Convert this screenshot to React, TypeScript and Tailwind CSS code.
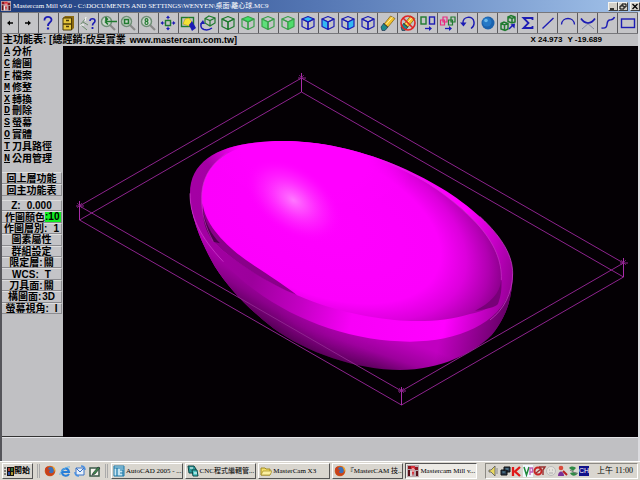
import { type ReactNode } from "react"

const GREEN = "#1f7a2e"
const BLUE = "#1c1cb4"

function Glyph({ children }: { children: ReactNode }) {
  return (
    <svg viewBox="0 0 18 18" className="size-[18px] shrink-0" fill="none" aria-hidden="true">
      {children}
    </svg>
  )
}

// Isometric wireframe cube, each visible face can be filled on its own
function Cube({
  color,
  top = "none",
  left = "none",
  right = "none",
}: {
  color: string
  top?: string
  left?: string
  right?: string
}) {
  return (
    <Glyph>
      <g stroke={color} strokeWidth="1.2" strokeLinejoin="round">
        <path d="M9 2.500 15 5 9 8 3 5Z" fill={top} />
        <path d="M3 5 9 8V15.500L3 12.500Z" fill={left} />
        <path d="M15 5 9 8V15.500L15 12.500Z" fill={right} />
      </g>
    </Glyph>
  )
}

function Magnifier({ children }: { children?: ReactNode }) {
  return (
    <Glyph>
      <path d="m11 11 5 5" stroke="#8a8a8a" strokeWidth="2.200" />
      <circle cx="7.500" cy="7.500" r="5" stroke="#6f8f77" strokeWidth="1.500" fill="#cfd8d0" />
      {children}
    </Glyph>
  )
}

function Pencil() {
  return (
    <>
      <path d="m2 13 3-4 4 4-3 3.500H3Z" fill="#1d8a8a" stroke="#124" strokeWidth=".6" />
      <path d="m5.500 9.500 6-7.500 4.500 2.500-7 8.500Z" fill="#f2c22e" stroke="#7a5a10" strokeWidth=".7" />
      <path d="m7 10.500 6.500-7.500" stroke="#fff2a0" />
      <path d="m4.500 9.500 4.500 4" stroke="#444" />
    </>
  )
}

const tools: { name: string; icon: ReactNode }[] = [
  {
    name: "Previous",
    icon: (
      <Glyph>
        <path d="M12 9H7" stroke="#000" strokeWidth="1.500" />
        <path d="M6 9 9 6.500v5Z" fill="#000" />
      </Glyph>
    ),
  },
  {
    name: "Next",
    icon: (
      <Glyph>
        <path d="M6 9h5" stroke="#000" strokeWidth="1.500" />
        <path d="M12 9 9 6.500v5Z" fill="#000" />
      </Glyph>
    ),
  },
  {
    name: "Help",
    icon: (
      <Glyph>
        <path d="M5.500 6.500C5 1.500 13 2 12.500 6 12.300 8.500 9 8 9 12" stroke={BLUE} strokeWidth="1.800" />
        <path d="M9 13.500v2" stroke={BLUE} strokeWidth="2.200" />
      </Glyph>
    ),
  },
  {
    name: "File",
    icon: (
      <Glyph>
        <path d="m4 4 2-2h9v12l-2 2H4Z" fill="#8c6a10" />
        <path d="M4 4h8.500v12H4Z" fill="#e6c63c" stroke="#4d3b08" />
        <path d="M4 10h8.500M7 6.500h3M7 12.500h3" stroke="#4d3b08" strokeWidth="1.300" />
      </Glyph>
    ),
  },
  {
    name: "Analyze",
    icon: (
      <Glyph>
        <path d="M1 11 7 4M2 11l6 5M4 8l5 3" stroke="#6b8a6b" />
        <path d="M1 11h4M7 3l-1 4" stroke="#fff" />
        <path d="M11 7c0-3 5-3 5 0 0 2-2.500 2-2.500 4.500" stroke={BLUE} strokeWidth="1.600" />
        <path d="M13.500 13v2" stroke={BLUE} strokeWidth="1.800" />
      </Glyph>
    ),
  },
  {
    name: "Zoom previous",
    icon: (
      <Magnifier>
        <path d="M7 7.500h11M6 7.500 9 4.500M6 7.500l3 3M7 3v5" stroke={GREEN} strokeWidth="1.700" />
      </Magnifier>
    ),
  },
  {
    name: "Zoom window",
    icon: (
      <Magnifier>
        <rect x="5.500" y="5.500" width="4" height="4" stroke={GREEN} strokeWidth="1.600" />
      </Magnifier>
    ),
  },
  {
    name: "Unzoom",
    icon: (
      <Magnifier>
        <circle cx="7.500" cy="6" r="1.400" stroke={GREEN} strokeWidth="1.200" />
        <circle cx="7.500" cy="9" r="1.500" stroke={GREEN} strokeWidth="1.200" />
      </Magnifier>
    ),
  },
  {
    name: "Fit screen",
    icon: (
      <Glyph>
        <rect x="6.500" y="6.500" width="5" height="5" stroke={GREEN} strokeWidth="1.400" />
        <path d="M9 1.500 7 4h4ZM9 16.500l-2-2.500h4ZM1.500 9 4 7v4ZM16.500 9 14 7v4Z" fill={BLUE} />
        <path d="M9 3v2.500M9 12.500V15M3 9h2.500M12.500 9H15" stroke={BLUE} />
      </Glyph>
    ),
  },
  {
    name: "Repaint",
    icon: (
      <Glyph>
        <rect x="2.500" y="3.500" width="12" height="9" stroke={GREEN} strokeWidth="1.400" />
        <path d="m4 10 2-5 4-1 3 4-3 4Z" fill="#f3e233" stroke="#b09a18" strokeWidth=".6" />
        <path d="m10 11 3-4 4 7-4 3Z" fill={BLUE} />
      </Glyph>
    ),
  },
  {
    name: "Rotate view",
    icon: (
      <Glyph>
        <path d="m10 2 6 2v5l-5 3-5-3V4.500ZM6 4.500l5 2 5-2.500M11 6.500V12" stroke={GREEN} strokeWidth="1.200" />
        <path d="M4 8c-3 2-3 6 1 7.500 3 1 6 0 8-1.500" stroke={BLUE} strokeWidth="1.400" />
        <path d="m1 10 3-4 2 4Z" fill={BLUE} />
      </Glyph>
    ),
  },
  { name: "Isometric view", icon: <Cube color={GREEN} /> },
  { name: "Top view", icon: <Cube color="#3aa04a" top="#3fe067" /> },
  { name: "Front view", icon: <Cube color="#3aa04a" left="#5fe07b" /> },
  { name: "Side view", icon: <Cube color="#3aa04a" right="#4fdc6c" /> },
  { name: "Top plane", icon: <Cube color={BLUE} top="#32b8f2" /> },
  { name: "Front plane", icon: <Cube color={BLUE} left="#32b8f2" /> },
  { name: "Side plane", icon: <Cube color={BLUE} right="#32b8f2" /> },
  { name: "3D plane", icon: <Cube color={BLUE} /> },
  {
    name: "Delete",
    icon: (
      <Glyph>
        <Pencil />
      </Glyph>
    ),
  },
  {
    name: "Undelete",
    icon: (
      <Glyph>
        <Pencil />
        <circle cx="9" cy="9" r="7" stroke="#e02424" strokeWidth="1.600" />
        <path d="m4 4 10 10" stroke="#e02424" strokeWidth="1.600" />
      </Glyph>
    ),
  },
  {
    name: "Translate",
    icon: (
      <Glyph>
        <rect x="2" y="3" width="5" height="7" stroke={GREEN} strokeWidth="1.400" />
        <rect x="10.500" y="3" width="5" height="7" stroke={BLUE} strokeWidth="1.400" />
        <path d="M6 14.500h5" stroke={BLUE} strokeWidth="1.300" />
        <path d="m13 14.500-3-2.500v5Z" fill={BLUE} />
      </Glyph>
    ),
  },
  {
    name: "Copy entities",
    icon: (
      <Glyph>
        <path d="M1.500 6h4v5h-4ZM4 3h4v5H4Z" stroke="#ea2b80" strokeWidth="1.200" />
        <path d="M9.500 6h4v5h-4ZM12 3h4v5h-4Z" stroke={GREEN} strokeWidth="1.200" />
        <path d="M6 14.500h5" stroke={BLUE} strokeWidth="1.300" />
        <path d="m13 14.500-3-2.500v5Z" fill={BLUE} />
      </Glyph>
    ),
  },
  {
    name: "Undo",
    icon: (
      <Glyph>
        <path d="M4 10C3 2 14 1 15 8c.4 3-1 5-3 6.500" stroke={BLUE} strokeWidth="1.500" />
        <path d="M1 8.500h6.500l-3 4Z" fill={BLUE} />
      </Glyph>
    ),
  },
  {
    name: "Shade",
    icon: (
      <Glyph>
        <circle cx="9" cy="9" r="6.500" fill="#1b62ad" />
        <circle cx="8" cy="8" r="4.500" fill="#2478c6" />
        <circle cx="7" cy="6.500" r="1.800" fill="#69b7ea" />
      </Glyph>
    ),
  },
  {
    name: "Gview",
    icon: (
      <Glyph>
        <path
          d="M2 9.500 5 8l4 1.500V15l-3 1.500-4-1.500ZM2 9.500 5.500 11 9 9.500M5.500 11v5M9 3l3-1.500L16 3v5l-3 1-4-1.500ZM9 3l4 1.500L16 3m-3 1.500V9"
          stroke={GREEN}
          strokeWidth="1.500"
        />
        <path d="m10 15 4-4" stroke={BLUE} strokeWidth="1.500" />
        <path d="m16 9.500-.5 5-4-4Z" fill={BLUE} />
      </Glyph>
    ),
  },
  {
    name: "Summary",
    icon: (
      <Glyph>
        <path d="M13.500 6V4H4.500l5 5-5 5h9v-2" stroke={BLUE} strokeWidth="1.800" />
      </Glyph>
    ),
  },
  {
    name: "Line",
    icon: (
      <Glyph>
        <path d="M3.500 14.500 14.500 4" stroke={BLUE} strokeWidth="1.400" />
      </Glyph>
    ),
  },
  {
    name: "Arc",
    icon: (
      <Glyph>
        <path d="M2.500 10.500C3 2.500 15 2.500 15.500 10.500" stroke={BLUE} strokeWidth="1.300" />
      </Glyph>
    ),
  },
  {
    name: "Fillet",
    icon: (
      <Glyph>
        <path d="m3 15 8-7M15 15 7 8" stroke="#7c84a0" strokeWidth=".9" />
        <path d="M2 4.500c4 6 10 6 14 0" stroke={BLUE} strokeWidth="1.700" />
      </Glyph>
    ),
  },
  {
    name: "Spline",
    icon: (
      <Glyph>
        <path d="M2.500 14c9 1 3-7 8-8 2-.4 4 0 5-3" stroke={BLUE} strokeWidth="1.400" />
      </Glyph>
    ),
  },
  {
    name: "Rectangle",
    icon: (
      <Glyph>
        <rect x="2.500" y="5" width="13" height="8.500" stroke={BLUE} strokeWidth="1.400" />
      </Glyph>
    ),
  },
]

const menu = [
  { key: "A", label: "分析" },
  { key: "C", label: "繪圖" },
  { key: "F", label: "檔案" },
  { key: "M", label: "修整" },
  { key: "X", label: "轉換" },
  { key: "D", label: "刪除" },
  { key: "S", label: "螢幕" },
  { key: "O", label: "實體" },
  { key: "T", label: "刀具路徑" },
  { key: "N", label: "公用管理" },
]

const settings = [
  { label: "Z:", value: "0.000", gap: true },
  { label: "作圖顏色", value: ":10", highlight: true },
  { label: "作圖層別:", value: "1", gap: true },
  { label: "圖素屬性" },
  { label: "群組設定" },
  { label: "限定層:", value: "關" },
  { label: "WCS:", value: "T", gap: true },
  { label: "刀具面:", value: "關" },
  { label: "構圖面:", value: "3D" },
  { label: "螢幕視角:", value: "I", gap: true },
]

const sideButton =
  "flex w-full flex-1 items-center justify-center whitespace-nowrap border-b border-r border-[#8b8b8f] border-t border-t-[#dededf] bg-[#c4c4c7] text-[10px] leading-[9px]"

function FirefoxIcon() {
  return (
    <svg viewBox="0 0 12 12" className="size-3 shrink-0" aria-hidden="true">
      <circle cx="6" cy="6" r="5.300" fill="#d2601c" />
      <circle cx="6.500" cy="5.300" r="3.200" fill="#3b6fb8" />
      <path d="M1 4c1-3 3-3 4-2L4 4l2 1-1 2c1 2 4 2 6-1-1 5-6 6-9 3Z" fill="#c8401a" />
      <path d="M8 1c3 1 4 4 3 6-1-3-2-4-3-6Z" fill="#f2a62c" />
    </svg>
  )
}

function MastercamIcon({ className = "size-3" }: { className?: string }) {
  return (
    <svg viewBox="0 0 12 12" className={`${className} shrink-0`} aria-hidden="true">
      <path d="M0 0h12v12H0Z" fill="#b9a9ad" />
      <path d="M1 1h3v3H1ZM8 2h3v3H8Z" fill="#8c1620" />
      <path d="M4 1h4v3H7v4l-1 3-1-3V4H4Z" fill="#d8303a" />
      <path d="M1 5h2v6H1ZM9 6h2v5H9Z" fill="#5c1018" />
      <path d="M5.500 3h1v4h-1ZM3.500 6h1v5h-1Z" fill="#fff" />
    </svg>
  )
}

const tasks = [
  {
    label: "AutoCAD 2005 - ...",
    icon: (
      <svg viewBox="0 0 12 12" className="size-3 shrink-0" aria-hidden="true">
        <path d="M1 1h10v10H1Z" fill="#c9e6f2" stroke="#1b78a8" />
        <path d="M1 3h10M4 3v8M7 5h3v6M7 8h3" stroke="#1b78a8" strokeWidth="1.200" fill="none" />
      </svg>
    ),
  },
  {
    label: "CNC程式編輯管...",
    icon: (
      <svg viewBox="0 0 12 12" className="size-3 shrink-0" aria-hidden="true">
        <path d="M1 1h6l2 3v4H2Z" fill="#2d9a9a" stroke="#0d4545" />
        <path d="M5 5h5l1 6H6Z" fill="#4cc6c2" stroke="#0d4545" />
        <path d="M3 3h3M7 8h3" stroke="#fff" />
      </svg>
    ),
  },
  {
    label: "MasterCam X3",
    icon: (
      <svg viewBox="0 0 12 12" className="size-3 shrink-0" aria-hidden="true">
        <path d="M1 3h4l1 1h4v6H1Z" fill="#f2df6a" stroke="#a08a22" />
        <path d="M3 6h9l-2 4H1Z" fill="#fbf0a0" stroke="#a08a22" strokeWidth=".7" />
      </svg>
    ),
  },
  { label: "『MasterCAM 技...", icon: <FirefoxIcon /> },
  { label: "Mastercam Mill v...", icon: <MastercamIcon />, active: true },
]

function TitleBar() {
  const control =
    "flex h-[9px] w-[10px] items-center justify-center border border-[#f4f4f0] border-b-[#404040] border-r-[#404040] bg-[#d4d0c8]"
  return (
    <header className="flex h-3 items-center bg-linear-to-r from-[#1c3b7c] via-[#5577b4] to-[#a3c3ea] pl-px font-['Liberation_Serif','Noto_Sans_CJK_TC',serif] text-[7px] leading-3 text-white">
      <MastercamIcon className="size-[10px]" />
      <h1 className="ml-[2px] flex-1 truncate">
        Mastercam Mill v9.0 - C:\DOCUMENTS AND SETTINGS\WENYEN\桌面\離心球.MC9
      </h1>
      <div className="flex">
        <button aria-label="Minimize" className={control}>
          <svg viewBox="0 0 8 7" className="h-[7px] w-2">
            <path d="M1 6h4" stroke="#000" strokeWidth="1.500" />
          </svg>
        </button>
        <button aria-label="Restore" className={control}>
          <svg viewBox="0 0 8 7" className="h-[7px] w-2" fill="none" stroke="#000">
            <path d="M3 3V1h4v3H5M1 3h4v3H1Z" />
          </svg>
        </button>
        <button aria-label="Close" className={`${control} ml-[2px]`}>
          <svg viewBox="0 0 8 7" className="h-[7px] w-2">
            <path d="m1.500 1 5 5M6.500 1l-5 5" stroke="#000" strokeWidth="1.300" />
          </svg>
        </button>
      </div>
    </header>
  )
}

function Sidebar() {
  return (
    <aside className="w-[61px] shrink-0 border-b border-[#333] bg-[#c0c0c3]">
      <nav className="flex h-[118px] flex-col">
        {menu.map((item) => (
          <button
            key={item.key}
            className="flex flex-1 items-center whitespace-nowrap pl-[2px] text-left text-[10px] leading-[11px]"
          >
            <span className="w-2 font-['Liberation_Mono',monospace] underline">{item.key}</span>
            {item.label}
          </button>
        ))}
      </nav>
      <div className="mt-2 flex h-6 flex-col pr-px">
        <button className={sideButton}>回上層功能</button>
        <button className={sideButton}>回主功能表</button>
      </div>
      <div className="mt-1 flex h-[114px] flex-col pr-px">
        {settings.map((item) => (
          <button key={item.label} className={sideButton}>
            <span className={item.highlight ? "pl-[3px]" : undefined}>{item.label}</span>
            {item.value && (
              <span
                className={
                  item.highlight
                    ? "grow self-stretch bg-[#12ee22] text-left"
                    : item.gap
                      ? "pl-[6px]"
                      : "pl-px"
                }
              >
                {item.value}
              </span>
            )}
          </button>
        ))}
      </div>
    </aside>
  )
}

// Shaded bowl inside its isometric bounding box
function Viewport() {
  return (
    <main className="min-w-0 flex-1 bg-[#040004]">
      <svg
        viewBox="63 46 575 391"
        preserveAspectRatio="xMinYMin meet"
        className="block size-full"
        role="img"
        aria-label="Shaded model"
      >
        <defs>
          <linearGradient id="shell" gradientUnits="userSpaceOnUse" x1="640" y1="640" x2="600" y2="755">
            <stop offset="0" stopColor="#c000c0" />
            <stop offset=".5" stopColor="#9c009c" />
            <stop offset="1" stopColor="#4c004c" />
          </linearGradient>
          <linearGradient id="shellLeft" gradientUnits="userSpaceOnUse" x1="330" y1="500" x2="260" y2="610">
            <stop offset="0" stopColor="#b400b4" />
            <stop offset=".5" stopColor="#8a008a" />
            <stop offset="1" stopColor="#4a004a" />
          </linearGradient>
          <linearGradient id="fadeRight" gradientUnits="userSpaceOnUse" x1="320" y1="0" x2="620" y2="0">
            <stop offset="0" stopColor="#fff" />
            <stop offset="1" stopColor="#000" />
          </linearGradient>
          <mask id="leftSide" maskUnits="userSpaceOnUse" x="0" y="0" width="1100" height="800">
            <path d="M0 0h1100v800H0Z" fill="url(#fadeRight)" />
          </mask>
          <linearGradient id="shellRight" gradientUnits="userSpaceOnUse" x1="820" y1="600" x2="1010" y2="640">
            <stop offset="0" stopColor="#500050" stopOpacity="0" />
            <stop offset="1" stopColor="#400040" stopOpacity=".75" />
          </linearGradient>
          <linearGradient id="rim" gradientUnits="userSpaceOnUse" x1="60" y1="300" x2="1028" y2="480">
            <stop offset="0" stopColor="#a400a4" />
            <stop offset=".22" stopColor="#9c009c" />
            <stop offset=".38" stopColor="#c400c4" />
            <stop offset=".54" stopColor="#f800f8" />
            <stop offset=".82" stopColor="#ff00ff" />
            <stop offset=".92" stopColor="#c800c8" />
            <stop offset="1" stopColor="#980098" />
          </linearGradient>
          <radialGradient
            id="inside"
            gradientUnits="userSpaceOnUse"
            cx="0"
            cy="0"
            r="1"
            gradientTransform="translate(455 310) rotate(22) scale(585 330)"
          >
            <stop offset="0" stopColor="#ff00ff" />
            <stop offset=".64" stopColor="#fc00fc" />
            <stop offset=".78" stopColor="#dc00dc" />
            <stop offset=".9" stopColor="#b000b0" />
            <stop offset="1" stopColor="#800080" />
          </radialGradient>
          <radialGradient
            id="shine"
            gradientUnits="userSpaceOnUse"
            cx="0"
            cy="0"
            r="1"
            gradientTransform="translate(370 240) rotate(36) scale(165 100)"
          >
            <stop offset="0" stopColor="#ff78ff" />
            <stop offset=".3" stopColor="#ff50ff" stopOpacity=".85" />
            <stop offset=".7" stopColor="#ff30ff" stopOpacity=".35" />
            <stop offset="1" stopColor="#ff00ff" stopOpacity="0" />
          </radialGradient>
          <radialGradient
            id="topGlow"
            gradientUnits="userSpaceOnUse"
            cx="0"
            cy="0"
            r="1"
            gradientTransform="translate(400 90) rotate(14) scale(330 190)"
          >
            <stop offset="0" stopColor="#ff00ff" />
            <stop offset=".6" stopColor="#ff00ff" />
            <stop offset="1" stopColor="#ff00ff" stopOpacity="0" />
          </radialGradient>
          <clipPath id="rimClip">
            <path d="M60 220C60 110 170 63 340 63C560 63 800 170 930 290C1000 355 1028 410 1028 460C1028 590 890 665 720 665C520 665 300 580 160 425C90 350 60 290 60 220Z" />
          </clipPath>
        </defs>

        <g transform="translate(170 120) scale(.33333)">
          <path
            d="M60 220C62 300 100 380 135 440C180 510 240 570 310 625C410 698 560 750 690 750C810 750 910 700 965 645C1010 590 1028 530 1028 460Z"
            fill="url(#shell)"
          />
          <path
            d="M60 220C62 300 100 380 135 440C180 510 240 570 310 625C410 698 560 750 690 750L700 600L300 450Z"
            fill="url(#shellLeft)"
            mask="url(#leftSide)"
          />
          <path d="M780 600V740C870 725 930 685 965 645C1010 590 1028 530 1028 460Z" fill="url(#shellRight)" />
          <path
            d="M60 220C60 110 170 63 340 63C560 63 800 170 930 290C1000 355 1028 410 1028 460C1028 590 890 665 720 665C520 665 300 580 160 425C90 350 60 290 60 220Z"
            fill="url(#rim)"
          />
          <path
            d="M95 235C95 130 180 66 340 64C520 63 720 140 850 245C950 325 994 400 994 470C994 535 980 565 900 582C850 598 800 603 740 603C660 603 540 585 430 545C310 500 190 425 130 365C105 320 95 280 95 235Z"
            fill="url(#inside)"
          />
          <path d="M60 0h700v300H60Z" fill="url(#topGlow)" clipPath="url(#rimClip)" />
          <path d="M180 60h400v360H180Z" fill="url(#shine)" />
          <path
            d="M98 250C105 320 180 390 250 435C300 468 350 500 380 525C290 488 190 425 130 365C105 320 96 290 98 250Z"
            fill="#8a008a"
          />
          <path d="M98 262C104 310 125 345 150 370L130 365C105 330 98 300 98 262Z" fill="#4c004c" />
          <path d="M994 480C990 520 960 550 915 572C950 568 975 562 984 552C992 530 996 510 994 480Z" fill="#780078" />
          <path
            d="M170 100C120 135 95 175 95 235C95 280 105 320 130 365M640 125C760 165 850 240 920 310C975 370 996 425 994 480"
            fill="none"
            stroke="#c83cc8"
            strokeWidth="3"
            opacity=".6"
          />
          <path
            d="M60 220C60 290 90 350 160 425M930 290C1000 355 1028 410 1028 460C1028 520 1000 570 960 600"
            fill="none"
            stroke="#d040d0"
            strokeWidth="3"
            opacity=".7"
          />
        </g>

        <g fill="none" stroke="#8e238e" strokeWidth="1">
          <path d="M301.500 78 79.500 206 401.500 391 623.500 263Z" />
          <path d="M301.500 92 79.500 220 401.500 405 623.500 277Z" />
          <path d="M301.500 73v19M79.500 201v19M401.500 387v18M623.500 258v19" stroke="#a82ca8" />
          <path d="M298 78h8M76 206h8M398 391h8M620 263h8" />
          <path d="m299 75 5 5m0-5-5 5M77 203l5 5m0-5-5 5M399 388l5 5m0-5-5 5M621 260l5 5m0-5-5 5" strokeWidth=".7" />
        </g>
      </svg>
    </main>
  )
}

function QuickLaunch() {
  return (
    <div className="flex gap-[3px] pl-1">
      <button aria-label="Firefox">
        <FirefoxIcon />
      </button>
      <button aria-label="Internet Explorer">
        <svg viewBox="0 0 12 12" className="size-3">
          <path d="M10 9C8 12 3 11 3 7s6-5 7 0H3" fill="none" stroke="#2a7fd8" strokeWidth="2" />
          <path d="M1 10C0 7 7 1 11 2" fill="none" stroke="#5ab0ea" />
        </svg>
      </button>
      <button aria-label="Outlook Express">
        <svg viewBox="0 0 12 12" className="size-3">
          <path d="M2 3h8v7H2Z" fill="#e8f1fb" stroke="#3a72c4" />
          <path d="m2 3 4 4 4-4" fill="none" stroke="#3a72c4" />
          <path d="M7 1c3 0 4 2 4 4M1 7c0 3 2 4 4 4" fill="none" stroke="#4a90e0" strokeWidth="1.500" />
        </svg>
      </button>
      <button aria-label="Show desktop">
        <svg viewBox="0 0 12 12" className="size-3">
          <path d="M1 3h9v8H1Z" fill="#f6f6ee" stroke="#3d5a4a" strokeWidth="1.500" />
          <path d="m4 8 5-6 2 1-5 6-3 1Z" fill="#3d8a4a" stroke="#223" strokeWidth=".6" />
        </svg>
      </button>
    </div>
  )
}

function Tray() {
  return (
    <div className="flex h-4 shrink-0 items-center border border-[#8c8a84] border-b-white border-r-white px-[2px]">
      <svg viewBox="0 0 91 12" className="h-3 w-[91px]" fill="none" aria-hidden="true">
        <path d="M1 5h2l4-4v10L3 7H1Z" fill="#e8d860" stroke="#555" strokeWidth=".8" />
        <path d="M9 3v6" stroke="#888" />
        <path d="M16 2h6v5h-6ZM13 5h6v5h-6Z" fill="#2a3c50" stroke="#111" />
        <path d="M14.500 7h3M17.500 4h3" stroke="#68a0b8" />
        <path d="M25 2v9M32 2l-5 4.500 5 4.500" stroke="#e01818" strokeWidth="2.300" />
        <path d="M35 0h10v12H35Z" fill="#f2f8ff" />
        <path d="m36 2 2.500 8L41 2" stroke="#1f8a3a" strokeWidth="1.500" />
        <path d="M42 10V3h2.500v4H42" stroke="#c060b8" strokeWidth="1.300" />
        <circle cx="50" cy="6" r="3.500" stroke="#c82424" strokeWidth="2" />
        <path d="M51 2h6l-2 3v5M48 8l5-4" stroke="#963030" strokeWidth="1.400" />
        <circle cx="63" cy="6" r="4.500" fill="#e4e2dc" stroke="#bbb" />
        <path d="M61 5h1M64 5h1M61 8h4" stroke="#aaa" />
        <circle cx="73" cy="3" r="2.300" fill="#d84a3a" />
        <path d="M70 11c0-6 6-6 6 0Z" fill="#7a3098" />
        <path d="m75 6 4 4" stroke="#b82020" strokeWidth="2" />
        <path d="M81 3c3-3 6-1 7 0l-3 3ZM82 8c2 4 6 3 8 0l-4-1Z" fill="#2f8a46" />
        <path d="m82 5 7 4" stroke="#777" />
      </svg>
      <span className="bg-[#11118a] font-['Liberation_Sans',sans-serif] text-[7px] leading-[10px] text-white">
        CH
      </span>
      <time className="ml-2 whitespace-nowrap pr-[2px] text-[8px]">上午 11:00</time>
    </div>
  )
}

function Taskbar() {
  return (
    <footer className="flex h-[19px] items-center border-t border-white bg-[#d9d6cf] px-[2px] font-['Liberation_Serif','Noto_Sans_CJK_TC',serif] text-[7px] leading-[14px] text-black">
      <button className="flex h-4 w-[31px] shrink-0 items-center border border-white border-b-[#555] border-r-[#555] pl-px font-bold whitespace-nowrap text-[8px]">
        <svg viewBox="0 0 10 10" className="size-[10px] shrink-0" aria-hidden="true">
          <path d="M0 2h2M0 5h2M0 8h2" stroke="#222" />
          <path d="M3 1h7v9H3Z" fill="#111" />
          <path d="M4 2h2v3H4Z" fill="#a8382c" />
          <path d="M7 2h2v3H7Z" fill="#33703a" />
          <path d="M4 6h2v3H4Z" fill="#3050a0" />
          <path d="M7 6h2v3H7Z" fill="#a89430" />
        </svg>
        開始
      </button>
      <div className="ml-1 h-[14px] w-[3px] border-x border-[#aaa]" />
      <QuickLaunch />
      <div className="ml-1 h-[14px] w-[3px] border-x border-[#aaa]" />
      <nav className="mr-2 ml-[3px] flex min-w-0 flex-1 gap-[2px]">
        {tasks.map((task) => (
          <button
            key={task.label}
            className={`flex h-4 min-w-0 flex-1 items-center gap-px overflow-hidden border pl-px whitespace-nowrap ${
              task.active
                ? "border-[#555] border-b-white border-r-white bg-[#eceae5]"
                : "border-white border-b-[#555] border-r-[#555]"
            }`}
          >
            {task.icon}
            {task.label}
          </button>
        ))}
      </nav>
      <Tray />
    </footer>
  )
}

export default function App() {
  return (
    <div className="flex h-screen flex-col overflow-hidden bg-[#c0c0c3] font-['Liberation_Sans','Noto_Sans_CJK_TC',sans-serif] text-black">
      <TitleBar />
      <div className="flex min-h-0 flex-1 flex-col border-l-2 border-r-2 border-l-[#55555a] border-r-[#dcdce0]">
        <div role="toolbar" className="flex h-[22px] shrink-0 border-y border-[#77777b]">
          {tools.map((tool, i) => (
            <button
              key={tool.name}
              aria-label={tool.name}
              className={`flex items-center justify-center overflow-hidden border-r border-[#5c5c60] bg-[#c4c4c7] ${
                i === 0 ? "w-[17px] shrink-0" : "min-w-0 flex-1"
              }`}
            >
              {tool.icon}
            </button>
          ))}
        </div>
        <div className="flex h-3 shrink-0 items-center justify-between pl-px pr-9 font-bold leading-3">
          <p className="flex gap-1 whitespace-nowrap text-[10px]">
            <span>主功能表: [總經銷:欣昊實業</span>
            <span className="text-[9px]">www.mastercam.com.tw]</span>
          </p>
          <p className="flex gap-[5px] text-[8px]">
            <span>X 24.973</span>
            <span>Y -19.689</span>
          </p>
        </div>
        <div className="flex min-h-0 flex-1 font-bold">
          <Sidebar />
          <Viewport />
        </div>
        <div className="h-6 shrink-0 border-t border-[#e4e4e8]" />
      </div>
      <Taskbar />
    </div>
  )
}
